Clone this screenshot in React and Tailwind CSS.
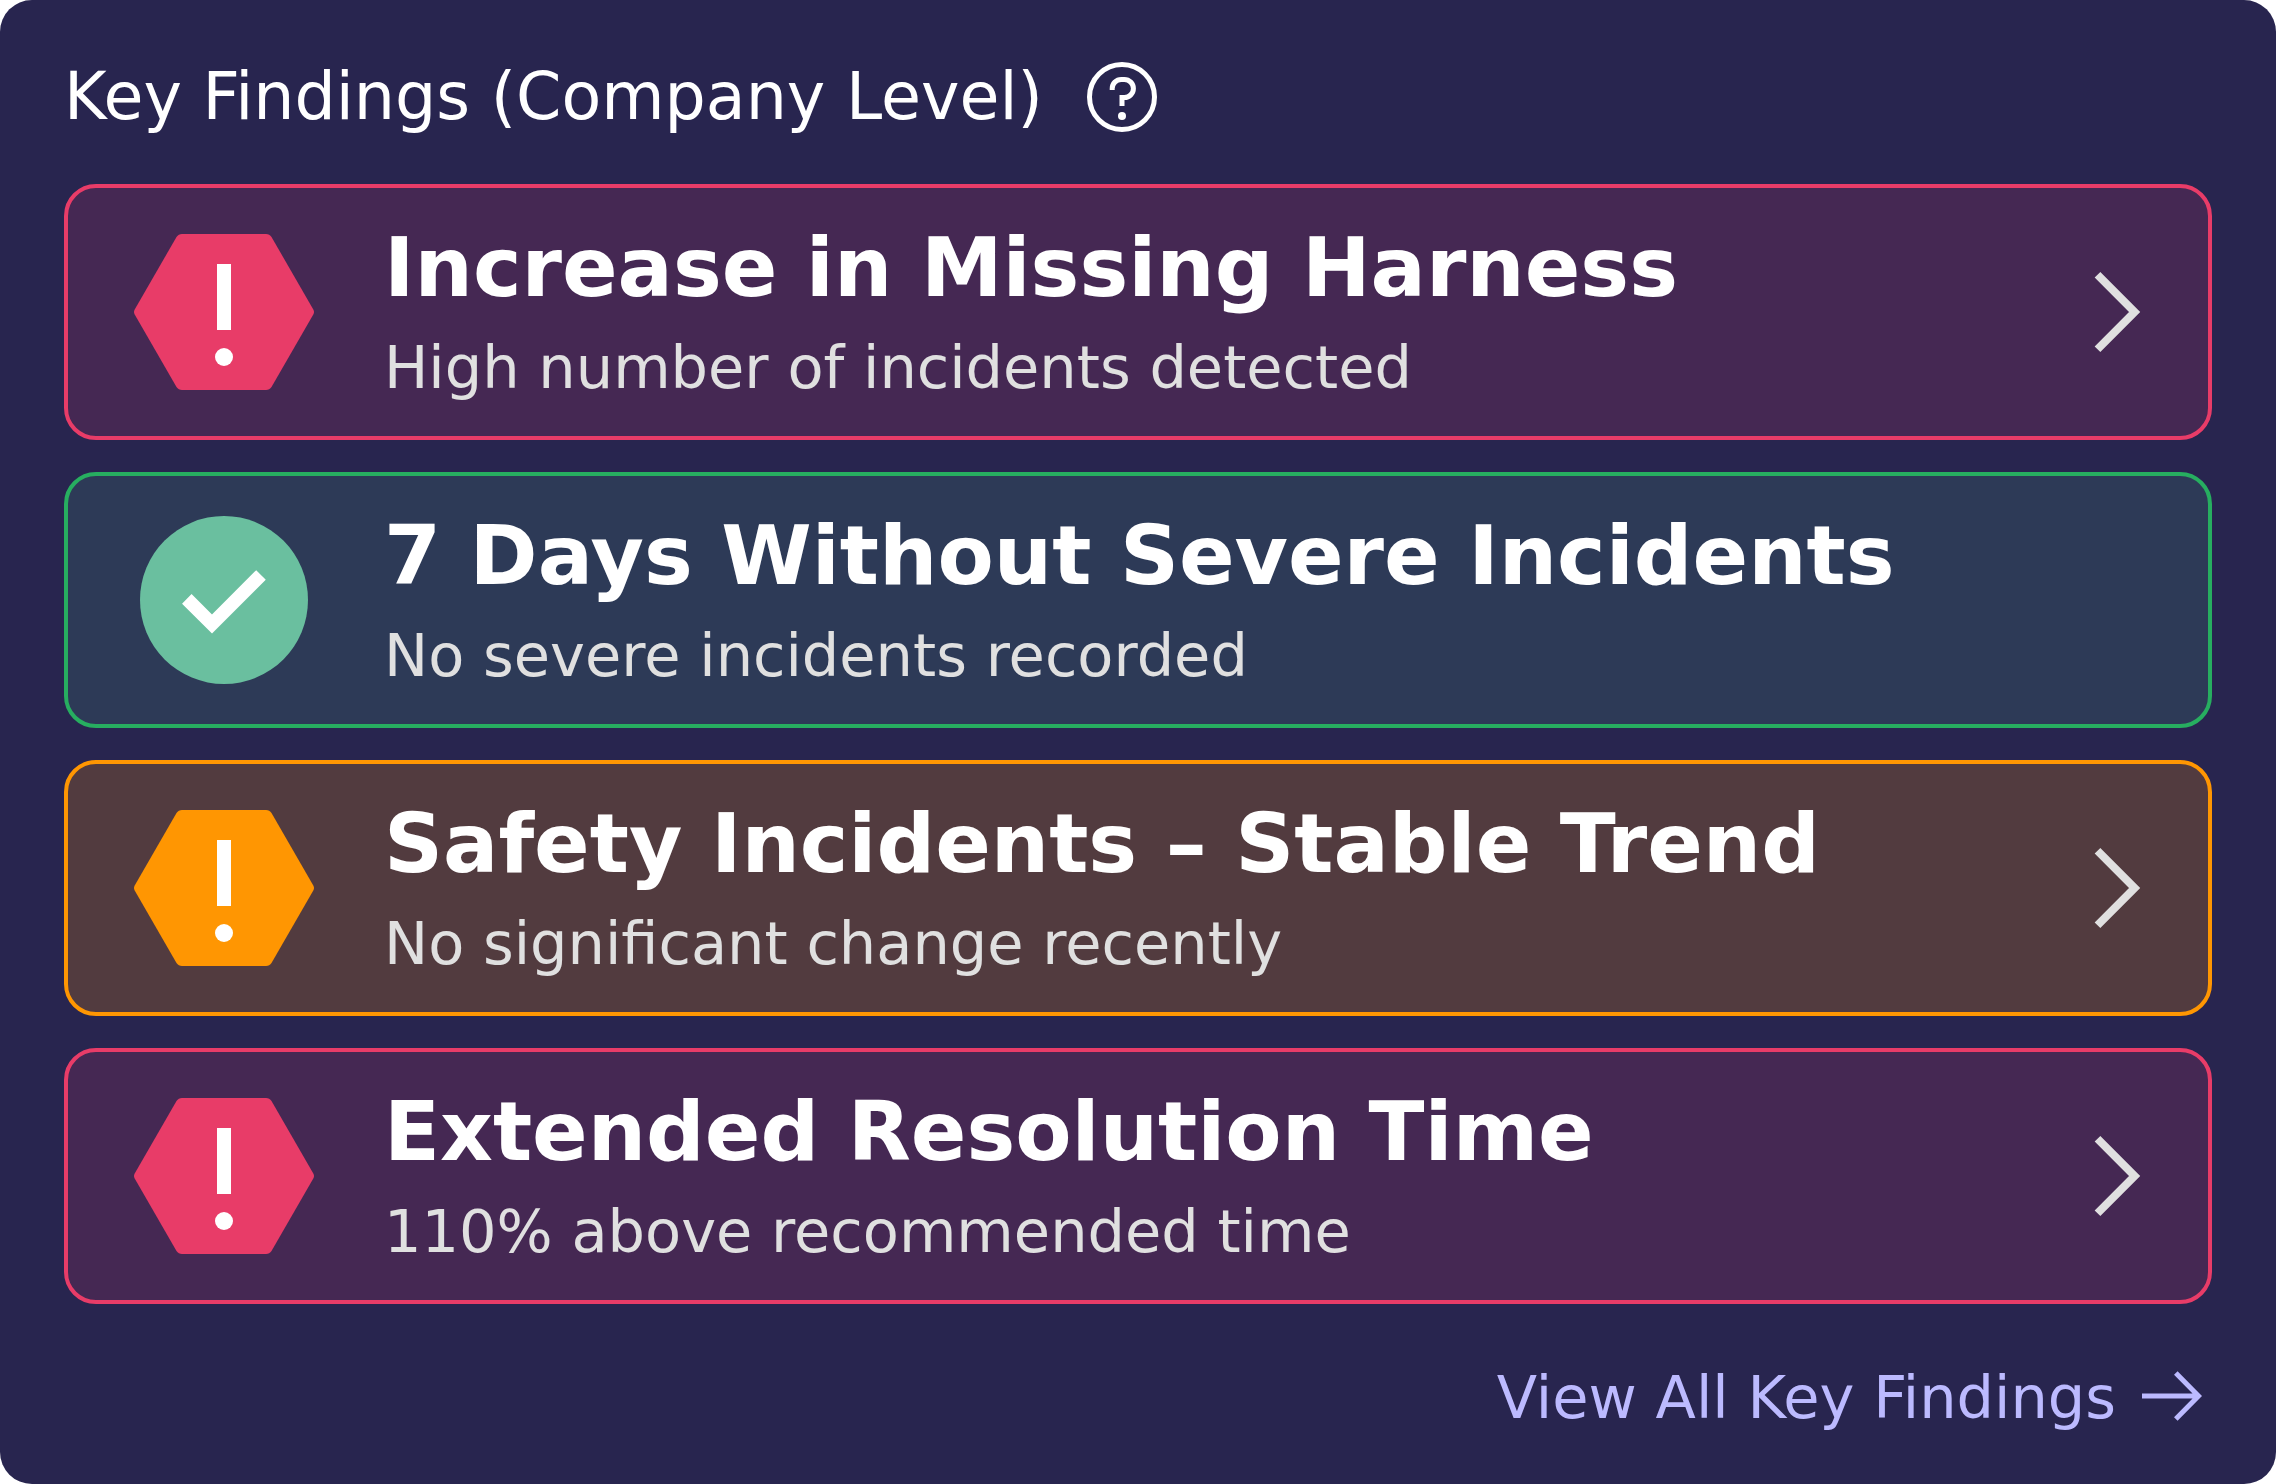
import { clsx } from 'clsx'

const findings = [
    {
        tone: 'danger',
        title: 'Increase in Missing Harness',
        text: 'High number of incidents detected',
        link: true,
    },
    {
        tone: 'success',
        title: '7 Days Without Severe Incidents',
        text: 'No severe incidents recorded',
        link: false,
    },
    {
        tone: 'warning',
        title: 'Safety Incidents – Stable Trend',
        text: 'No significant change recently',
        link: true,
    },
    {
        tone: 'danger',
        title: 'Extended Resolution Time',
        text: '110% above recommended time',
        link: true,
    },
]

const cardTones = {
    danger: 'border-[#e83c68] bg-[#452853]',
    success: 'border-[#27ae60] bg-[#2d3a57]',
    warning: 'border-[#ff9602] bg-[#523b3f]',
}

export default function App() {
    return (
        <main className="bg-white">
            <section className="min-h-screen flex flex-col rounded-[32px] bg-[#28254f] px-16 pt-14 pb-[50px] font-['DejaVu_Sans',sans-serif]">
                <header className="flex items-center gap-11 text-white">
                    <h1 className="text-[65px] leading-[82px]">Key Findings (Company Level)</h1>
                    <button type="button" aria-label="About key findings">
                        <HelpIcon />
                    </button>
                </header>
                <ul className="mt-[46px] space-y-8">
                    {findings.map(finding => (
                        <li key={finding.title}>
                            <Finding {...finding} />
                        </li>
                    ))}
                </ul>
                <a href="#" className="mt-[58px] flex items-center gap-6 self-end text-[59px] leading-[72px] text-[#bcbaff]">
                    View All Key Findings
                    <ArrowIcon />
                </a>
            </section>
        </main>
    )
}

const Finding = ({tone, title, text, link}) => {
    const Card = link ? 'a' : 'div'
    return (
        <Card
            href={link ? '#' : undefined}
            className={clsx("flex items-center rounded-[32px] border-4 px-16 py-8", cardTones[tone])}
        >
            {tone === 'success' ? <CheckIcon /> : <AlertIcon tone={tone} />}
            <div className="ml-[68px] grow space-y-4">
                <h2 className="text-[82px] leading-[96px] font-bold text-white">{title}</h2>
                <p className="text-[59px] leading-[72px] text-[#e0e0e0]">{text}</p>
            </div>
            {link && <ChevronIcon />}
        </Card>
    )
}

const AlertIcon = ({tone}) => (
    <svg
        viewBox="0 0 184 168"
        aria-hidden="true"
        className={clsx("w-[184px] h-[168px] shrink-0", tone === 'danger' ? "fill-[#e83c68]" : "fill-[#ff9602]")}
    >
        <path d="M50 6H134Q137.500 6 139.500 9L181.300 81.500Q182.700 84 181.300 86.500L139.500 159Q137.500 162 134 162H50Q46.500 162 44.500 159L2.700 86.500Q1.300 84 2.700 81.500L44.500 9Q46.500 6 50 6Z" />
        <path className="fill-white" d="M85 36h14v66H85z" />
        <circle className="fill-white" cx="92" cy="129" r="9" />
    </svg>
)

const CheckIcon = () => (
    <svg viewBox="0 0 184 168" fill="none" aria-hidden="true" className="w-[184px] h-[168px] shrink-0">
        <circle cx="92" cy="84" r="84" fill="#6abf9f" />
        <path d="M54.800 82.900L80 108L129 58.900" stroke="white" strokeWidth="13.500" />
    </svg>
)

const ChevronIcon = () => (
    <svg viewBox="0 0 52 84" fill="none" aria-hidden="true" className="w-[52px] h-[84px] shrink-0">
        <path d="M5.500 4.700L42.600 42L5.500 79.300" stroke="#e0e0e0" strokeWidth="8" />
    </svg>
)

const HelpIcon = () => (
    <svg viewBox="0 0 70 70" fill="none" stroke="currentColor" strokeWidth="5" className="w-[70px] h-[70px]">
        <circle cx="35" cy="35" r="32.500" />
        <path d="M25.200 28V26.500A9 9 0 0 1 34.200 17.500H37.400A9 9 0 0 1 46.400 26.500A9 9 0 0 1 37.400 35.500H35V44" />
        <circle cx="35" cy="54" r="4" fill="currentColor" stroke="none" />
    </svg>
)

const ArrowIcon = () => (
    <svg viewBox="0 0 72 72" fill="none" stroke="currentColor" strokeWidth="5" aria-hidden="true" className="w-[72px] h-[72px]">
        <path d="M2 34H58M35.800 11L58.500 34L35.800 57" />
    </svg>
)
